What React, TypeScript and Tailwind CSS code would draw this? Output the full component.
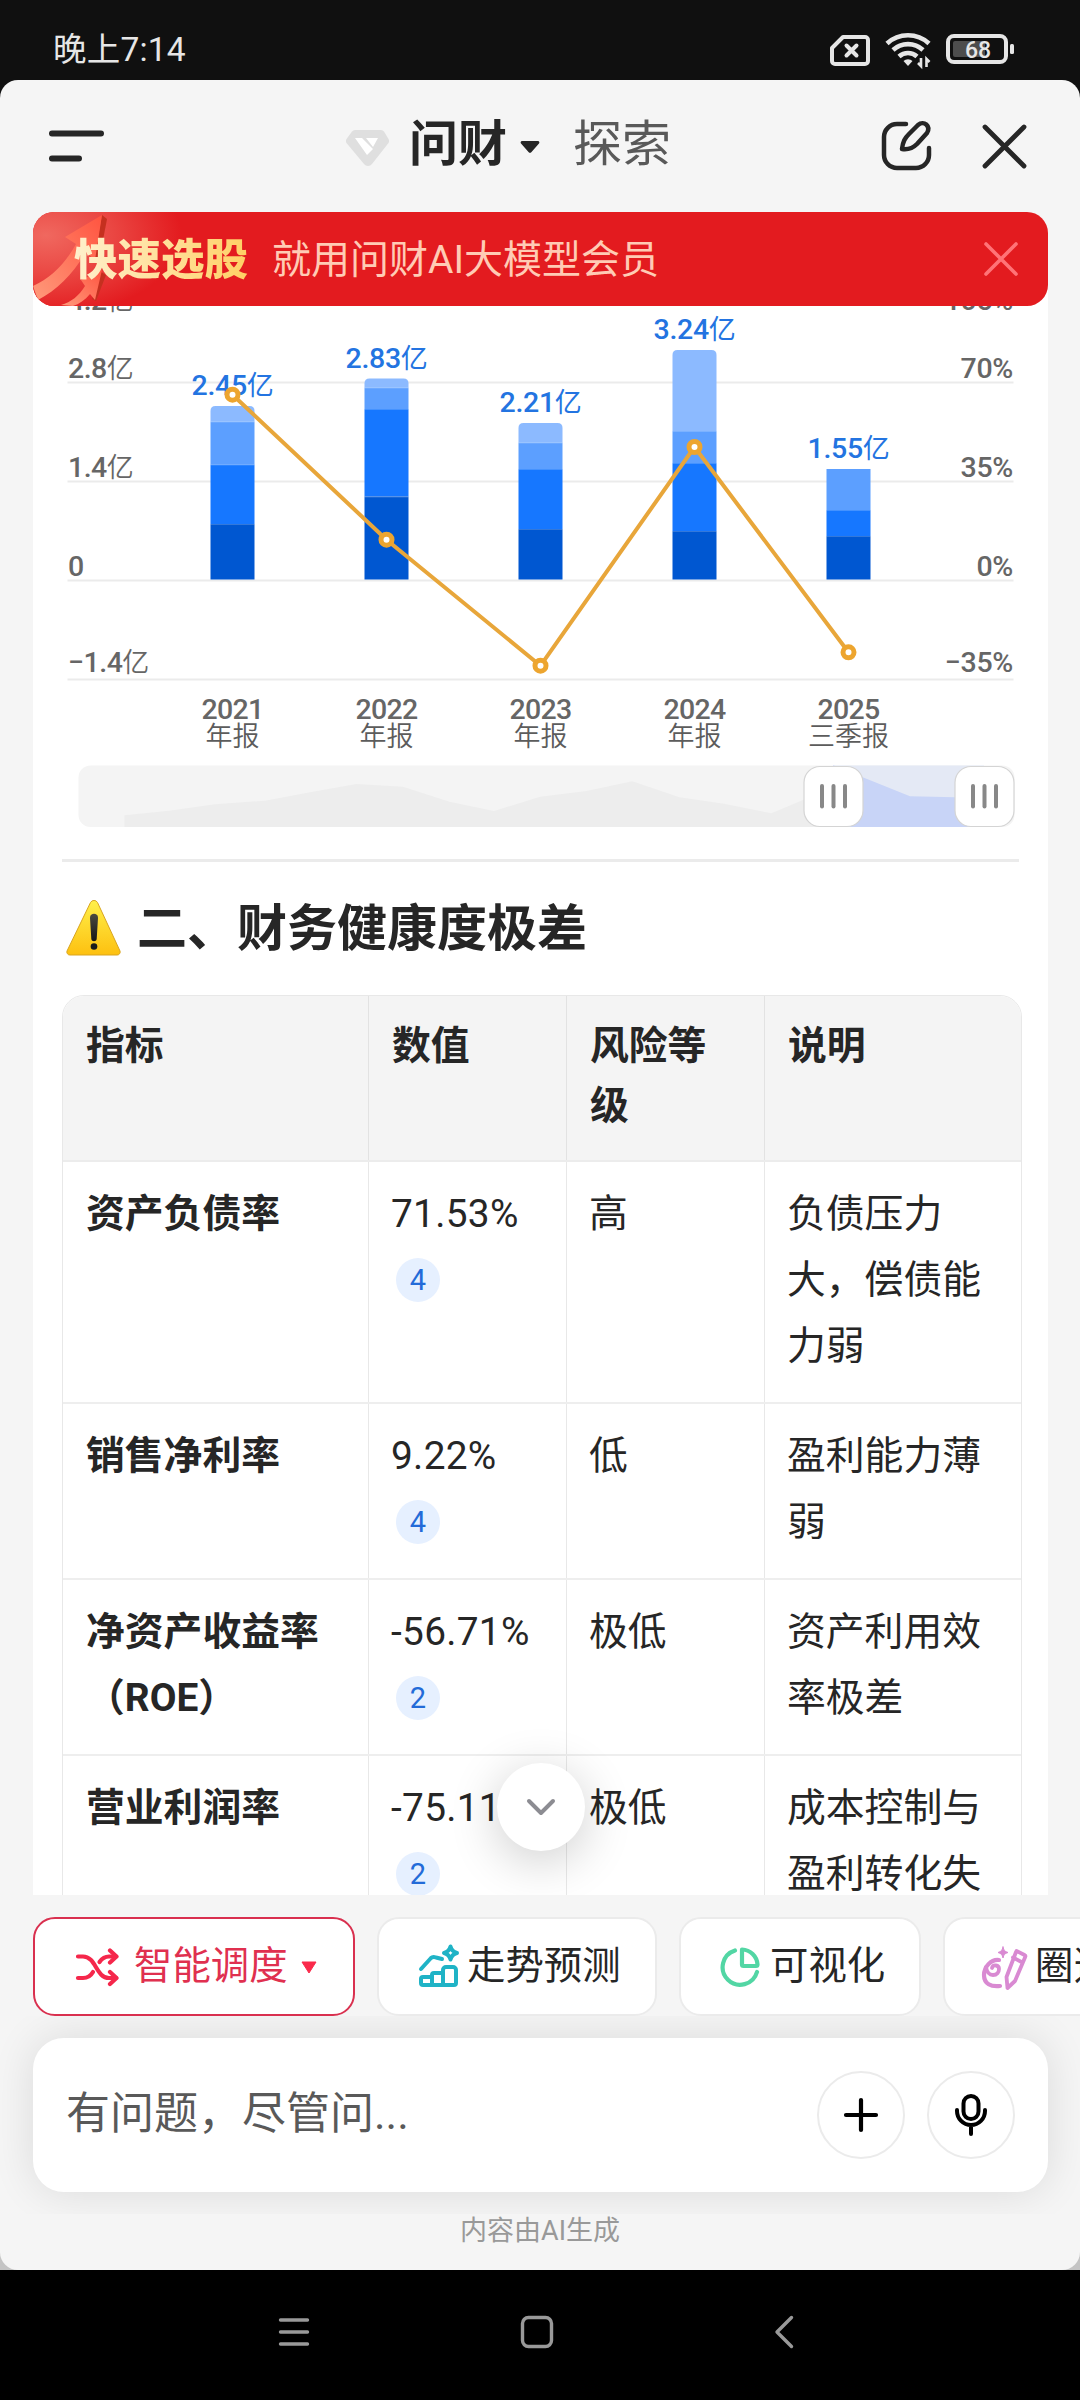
import type { ReactNode } from "react";

/* ---------------- Chart data ---------------- */

interface Period {
  x: number;
  year: string;
  label: string;
  total: string;
  /** Baseline of the total label above the bar. */
  totalY: number;
  /** Segment tops from the lightest to the darkest band; null when absent. */
  tops: (number | null)[];
  /** Position of the growth-rate point. */
  rateY: number;
}

const CHART_TOP = 252;
const ZERO_Y = 580;
const BAR_WIDTH = 44;
const BAND_COLORS = ["#8cbaff", "#5c9fff", "#1677ff", "#0057d1"];

const PERIODS: Period[] = [
  { x: 232.5, year: "2021", label: "年报", total: "2.45", totalY: 394, tops: [406, 421.5, 464.5, 524], rateY: 394.7 },
  { x: 386.5, year: "2022", label: "年报", total: "2.83", totalY: 367, tops: [378.5, 387.5, 409, 496.5], rateY: 539.7 },
  { x: 540.5, year: "2023", label: "年报", total: "2.21", totalY: 411, tops: [423, 442.5, 469, 529], rateY: 665.7 },
  { x: 694.5, year: "2024", label: "年报", total: "3.24", totalY: 338, tops: [350, 431, 463, 531], rateY: 447 },
  { x: 848.5, year: "2025", label: "三季报", total: "1.55", totalY: 457, tops: [null, 469, 510, 536], rateY: 652.3 },
];

const AXIS = [
  { y: 309.5, left: "4.2", right: "105%" },
  { y: 378, left: "2.8", right: "70%" },
  { y: 477, left: "1.4", right: "35%" },
  { y: 575.5, left: "0", right: "0%" },
  { y: 671.5, left: "−1.4", right: "−35%" },
];

const GRID_LINES = [382, 481, 580, 679];

/* ---------------- Table data ---------------- */

interface Metric {
  name: ReactNode;
  value: string;
  source: number;
  level: string;
  note: string;
}

const METRICS: Metric[] = [
  { name: "资产负债率", value: "71.53%", source: 4, level: "高", note: "负债压力大，偿债能力弱" },
  { name: "销售净利率", value: "9.22%", source: 4, level: "低", note: "盈利能力薄弱" },
  { name: <>净资产收益率<br />（ROE）</>, value: "-56.71%", source: 2, level: "极低", note: "资产利用效率极差" },
  { name: "营业利润率", value: "-75.11%", source: 2, level: "极低", note: "成本控制与盈利转化失衡" },
];

const COLUMNS = "grid grid-cols-[306px_198px_198px_257px]";

/* ---------------- Status bar ---------------- */

function StatusBar() {
  return (
    <div className="flex h-20 items-center justify-between bg-[#101010] pl-[53px] pr-[64px] text-[#e6e6e6]">
      <span className="mt-[20px] text-[33.500px] leading-none tracking-[0.200px]">晚上7:14</span>
      <svg width="188" height="40" viewBox="828 30 188 40" className="mt-[20px]" fill="none">
        {/* SIM missing */}
        <path d="M843 37H865a3 3 0 0 1 3 3V61a3 3 0 0 1-3 3H835a3 3 0 0 1-3-3V48Z" stroke="#e6e6e6" strokeWidth="4" strokeLinejoin="round" />
        <path d="M846.500 45.500l10 10M856.500 45.500l-10 10" stroke="#e6e6e6" strokeWidth="4" strokeLinecap="round" />
        {/* Wi-Fi */}
        <path d="M887 43.500a31 31 0 0 1 42 0M893 50a22 22 0 0 1 30 0M899 56.500a13.500 13.500 0 0 1 18 0" stroke="#e6e6e6" strokeWidth="4.600" />
        <path d="M903.500 61a6.500 6.500 0 0 1 9 0L908 66Z" fill="#e6e6e6" />
        <path d="M921 58V66l-3-3M926.500 67V59l3 3" stroke="#e6e6e6" strokeWidth="2.600" />
        {/* Battery */}
        <rect x="948" y="36" width="58" height="26" rx="6" stroke="#e6e6e6" strokeWidth="4" />
        <rect x="953" y="41" width="32" height="16" rx="2" fill="#4d4d4d" />
        <rect x="1010" y="44" width="4" height="10" rx="1.500" fill="#e6e6e6" />
        <text x="978" y="57.500" textAnchor="middle" fontSize="23" fontWeight="500" fill="#e6e6e6" className="font-['Roboto']">68</text>
      </svg>
    </div>
  );
}

/* ---------------- Header ---------------- */

function Header() {
  return (
    <header className="flex h-[132px] items-center pl-[47px] pr-[52px]">
      <svg width="60" height="40" viewBox="47 126 60 40" stroke="#262626" strokeWidth="6" strokeLinecap="round">
        <path d="M52 133.500H101M52 158.500H79" />
      </svg>
      <svg width="44" height="38" viewBox="347 128 44 38" className="ml-[239px] mt-[3px]">
        <path d="M356 129H382a4 4 0 0 1 3 1.500L389.500 138a4 4 0 0 1 0 4L373 163a5 5 0 0 1-8 0L347.500 142a4 4 0 0 1 0-4L353 130.500a4 4 0 0 1 3-1.500Z" fill="#dfdfdf" />
        <path d="M356 137h7l11 11-6 6ZM367 137h12l-5 9Z" fill="#fff" />
      </svg>
      <span className="ml-[19px] -mt-[3px] text-[49px] font-bold leading-none text-[#262626]">问财</span>
      <svg width="22" height="14" viewBox="0 0 22 14" className="ml-[12px] mt-[1px]">
        <path d="M3 1H19a1.500 1.500 0 0 1 1 2.500L12.500 12a2 2 0 0 1-3 0L2 3.500A1.500 1.500 0 0 1 3 1Z" fill="#262626" />
      </svg>
      <span className="ml-[32px] -mt-[3px] text-[49px] leading-none text-[#595959]">探索</span>
      <div className="ml-auto flex items-center gap-[47px]">
        <svg width="54" height="54" viewBox="878 119 54 54" fill="none" stroke="#262626" strokeWidth="4.500" strokeLinecap="round" strokeLinejoin="round">
          <path d="M905 124H896a13 13 0 0 0-13 13v18a13 13 0 0 0 13 13h19a13 13 0 0 0 13-13V148" />
          <path d="M901 149c1-8 3-11 7-15l9-9c6-5 13 1 9 8l-10 11c-4 4-8 6-15 5Z" />
        </svg>
        <svg width="48" height="48" viewBox="979 122 48 48" stroke="#262626" strokeWidth="4.800" strokeLinecap="round">
          <path d="M984 127l39 39M1023 127l-39 39" />
        </svg>
      </div>
    </header>
  );
}

function PromoBanner() {
  return (
    <div className="absolute inset-x-0 top-0 z-10 flex h-[94px] items-center overflow-hidden rounded-[21px] bg-[#e31b1f]">
      <svg width="160" height="94" viewBox="0 0 160 94" className="absolute left-0 top-0">
        <defs>
          <radialGradient id="glow" cx="0.080" cy="0.250" r="0.850">
            <stop offset="0" stopColor="#f0685f" />
            <stop offset="0.500" stopColor="#ea4642" />
            <stop offset="1" stopColor="#e31b1f" />
          </radialGradient>
          <linearGradient id="arrow" x1="0" y1="1" x2="1" y2="0">
            <stop offset="0" stopColor="#ff9a7b" />
            <stop offset="1" stopColor="#ff5440" />
          </linearGradient>
        </defs>
        <rect width="160" height="94" fill="url(#glow)" />
        <path d="M69 3l5 4-8 42-5-2Z" fill="#c5301f" />
        <path d="M0 74C18 66 32 52 43 32L32 25 69 3 62 48 53 40C40 62 24 78 5 88Z" fill="url(#arrow)" />
        <path d="M68 60l5 3-10 26-4-2Z" fill="#c5301f" />
        <path d="M28 93C38 90 46 84 52 74L48 68 69 58 62 88 57 82C52 88 46 92 40 94Z" fill="url(#arrow)" />
      </svg>
      <span className="relative ml-[41px] mt-[3px] bg-gradient-to-r from-[#fff0cc] to-[#ffd063] bg-clip-text text-[43.500px] font-black leading-[60px] text-transparent">
        快速选股
      </span>
      <span className="relative ml-[24px] mt-[2px] text-[39px] leading-none text-[#ffcbb5]">就用问财AI大模型会员</span>
      <svg width="36" height="36" viewBox="0 0 36 36" className="ml-auto mr-[29px]" stroke="#ff7377" strokeWidth="3.600" strokeLinecap="round">
        <path d="M3 3l30 30M33 3L3 33" />
      </svg>
    </div>
  );
}

/* ---------------- Chart ---------------- */

function RangeHandle({ x }: { x: number }) {
  return (
    <g>
      <rect x={x} y="766.500" width="59" height="60" rx="16" fill="#fff" stroke="#d4d4d4" strokeWidth="1.200" />
      {[18, 29.500, 41].map((dx) => (
        <rect key={dx} x={x + dx - 2} y="784" width="4" height="24.500" rx="2" fill="#888" />
      ))}
    </g>
  );
}

function RevenueChart() {
  const linePoints = PERIODS.map((p) => `${p.x},${p.rateY}`).join(" ");
  return (
    <svg width="1015" height="580" viewBox={`33 ${CHART_TOP} 1015 580`} className="block">
      {GRID_LINES.map((y) => (
        <rect key={y} x="67.500" y={y - 0.500} width="946" height="2" fill="#ebebeb" />
      ))}

      {AXIS.map((tick) => (
        <g key={tick.y} fill="#666" fontSize="28.500" fontWeight="500" className="font-['Roboto','Noto_Sans_CJK_SC']">
          <text x="68" y={tick.y} letterSpacing="-0.500">
            {tick.left}
            {tick.left !== "0" && <tspan fontSize="27" fontWeight="350">亿</tspan>}
          </text>
          <text x="1013" y={tick.y} textAnchor="end" letterSpacing="-0.300">{tick.right}</text>
        </g>
      ))}

      {PERIODS.map((p) => {
        const visible = p.tops.filter((t) => t !== null);
        return (
          <g key={p.year}>
            {p.tops.map((top, i) => {
              if (top === null) return null;
              const bottom = p.tops[i + 1] ?? ZERO_Y - 0.500;
              const left = p.x - BAR_WIDTH / 2;
              /* Only the lightest band has rounded shoulders. */
              return i === 0 ? (
                <path
                  key={i}
                  d={`M${left} ${bottom}V${top + 5}q0-5 5-5h${BAR_WIDTH - 10}q5 0 5 5V${bottom}Z`}
                  fill={BAND_COLORS[i]}
                />
              ) : (
                <rect key={i} x={left} y={top} width={BAR_WIDTH} height={bottom - top} fill={BAND_COLORS[i]} />
              );
            })}
            {visible.slice(1).map((top) => (
              <rect key={top} x={p.x - BAR_WIDTH / 2} y={top} width={BAR_WIDTH} height="1" fill="#fff" opacity="0.200" />
            ))}
          </g>
        );
      })}

      {PERIODS.map((p) => (
        <g key={p.year} textAnchor="middle" className="font-['Roboto','Noto_Sans_CJK_SC']">
          <text x={p.x} y={p.totalY + 0.500} fontSize="28.500" fontWeight="500" letterSpacing="-0.300" fill="#2374e1">
            {p.total}
            <tspan fontSize="27" fontWeight="400">亿</tspan>
          </text>
          <text x={p.x} y="718.500" fontSize="28.500" fontWeight="500" letterSpacing="-0.700" fill="#666">{p.year}</text>
          <text x={p.x} y="745.500" fontSize="27" fontWeight="350" fill="#5c5c5c">{p.label}</text>
        </g>
      ))}

      <polyline points={linePoints} fill="none" stroke="#e8a63a" strokeWidth="4" strokeLinejoin="round" />
      {PERIODS.map((p) => (
        <circle key={p.year} cx={p.x} cy={p.rateY} r="5.500" fill="#fff" stroke="#eda52f" strokeWidth="5" />
      ))}

      {/* Range selector under the plot */}
      <clipPath id="track">
        <rect x="78.500" y="765.500" width="936" height="61.500" rx="12" />
      </clipPath>
      <g clipPath="url(#track)">
        <rect x="78" y="765" width="937" height="62" fill="#f4f4f4" />
        <path
          d="M124.500 827V815.300L169 810.700 215 804.300 265 800.700 310 792.300 356.500 784 403 786.700 449.500 801.700 494 811 540 796.700 586.500 791 632.300 781.300 679.500 797.300 724 803.700 771.400 813.300 803 800 833 787V827Z"
          fill="#ededed"
        />
        <rect x="833" y="765" width="151" height="62" fill="#e4e9f5" />
        <path d="M833 827V765L862.700 777.300 910 796.300 955 797.300 984 798V827Z" fill="#c8d4f7" />
      </g>
      <RangeHandle x={804} />
      <RangeHandle x={955} />
    </svg>
  );
}

/* ---------------- Table ---------------- */

function SectionHeading() {
  return (
    <h2 className="flex h-[133px] items-center pl-[32px] text-[50px] font-bold leading-none text-[#262626]">
      <svg width="58" height="58" viewBox="0 0 58 58" className="-mt-px">
        <defs>
          <linearGradient id="warn" x1="0" y1="0" x2="0" y2="1">
            <stop offset="0" stopColor="#fff04a" />
            <stop offset="1" stopColor="#fdc010" />
          </linearGradient>
          <linearGradient id="mark" x1="0" y1="0" x2="0" y2="1">
            <stop offset="0" stopColor="#4a4a40" />
            <stop offset="1" stopColor="#161616" />
          </linearGradient>
        </defs>
        <path
          d="M25.500 3.500a4 4 0 0 1 7 0L55 52a3 3 0 0 1-3 4H5a3 3 0 0 1-3-4Z"
          fill="url(#warn)"
          stroke="#d9a520"
          strokeWidth="1"
        />
        <path d="M25 18.500c0-5 8-5 8 0L31.700 40c-.3 3-5.100 3-5.400 0Z" fill="url(#mark)" />
        <circle cx="29" cy="47.500" r="3.300" fill="#1c1c1c" />
      </svg>
      <span className="ml-[14px]">二、财务健康度极差</span>
    </h2>
  );
}

function SourceBadge({ id }: { id: number }) {
  return (
    <span className="ml-[5px] mt-[11px] flex size-11 items-center justify-center rounded-full bg-[#e6f0ff] text-[29px] leading-none text-[#236bd8]">
      {id}
    </span>
  );
}

function MetricTable() {
  return (
    <div className="ml-[29px] w-[960px] overflow-hidden rounded-t-[22px] border border-[#e8e8e8] text-[38.800px] text-[#262626]">
      <div className={`${COLUMNS} h-[166px] divide-x divide-[#e2e2e2] border-b-2 border-[#ececec] bg-[#f4f4f4] font-bold leading-[60px]`}>
        {["指标", "数值", "风险等级", "说明"].map((title) => (
          <div key={title} className="pl-[23px] pr-[22px] pt-[20px]">{title}</div>
        ))}
      </div>
      {METRICS.map((m) => (
        <div key={m.value} className={`${COLUMNS} divide-x divide-[#e8e8e8] border-b-2 border-[#eee] leading-[66px]`}>
          <div className="whitespace-nowrap pb-[23px] pl-[23px] pt-[19px] font-bold">{m.name}</div>
          <div className="pb-[23px] pl-[22px] pt-[19px]">
            <div className="whitespace-nowrap tracking-[0.300px]">{m.value}</div>
            <SourceBadge id={m.source} />
          </div>
          <div className="px-[22px] pb-[23px] pt-[19px]">{m.level}</div>
          <div className="px-[22px] pb-[23px] pt-[19px]">{m.note}</div>
        </div>
      ))}
    </div>
  );
}

/* ---------------- Bottom area ---------------- */

function Chip({ children, active = false, className }: { children: ReactNode; active?: boolean; className: string }) {
  return (
    <div
      className={`flex h-[99px] shrink-0 items-center whitespace-nowrap rounded-[22px] border-2 bg-white text-[38.400px] leading-none ${
        active ? "border-[#d9304f] text-[#e0304f]" : "border-[#ebebeb] text-[#262626]"
      } ${className}`}
    >
      {children}
    </div>
  );
}

function SkillChips() {
  return (
    <div className="flex h-[121px] items-end gap-[22px] overflow-hidden pl-[33px]">
      <Chip active className="w-[322px] pl-[40px]">
        <svg width="44" height="40" viewBox="0 0 44 40" fill="none" stroke="#f5274b" strokeWidth="4.200" strokeLinecap="round" strokeLinejoin="round">
          <path d="M3 9.500H8C21 9.500 21 31 34 31H41M3 31H8c5 0 8-2.500 10-6M24.500 15C27 11.500 30 9.500 34 9.500H41" />
          <path d="M35 3.500l6.500 6-6.500 6M35 25l6.500 6-6.500 6" />
        </svg>
        <span className="ml-[15px]">智能调度</span>
        <svg width="16" height="13" viewBox="0 0 16 13" className="ml-[13px] mt-[2px]">
          <path d="M1 1H15L8 12Z" fill="#fa2a4b" stroke="#fa2a4b" strokeLinejoin="round" />
        </svg>
      </Chip>
      <Chip className="w-[280px] pl-[38px]">
        <svg width="44" height="46" viewBox="0 0 44 46" className="-mt-[3px]" fill="none" stroke="#1fb3c6" strokeWidth="4" strokeLinecap="round" strokeLinejoin="round">
          <path d="M4 27L14 16c1.500-1.500 3-1.300 5-.5l6 1.500" />
          <path d="M33.500 4.500c1 4 2.500 5.500 6.500 6.500-4 1-5.500 2.500-6.500 6.500-1-4-2.500-5.500-6.500-6.500 4-1 5.500-2.500 6.500-6.500Z" />
          <path d="M4 37a2 2 0 0 1 2-2h9v8H6a2 2 0 0 1-2-2ZM15 33a2 2 0 0 1 2-2h9v12H15ZM26 28a3 3 0 0 1 3-3h7a3 3 0 0 1 3 3v13a2 2 0 0 1-2 2H26Z" />
        </svg>
        <span className="ml-[6px]">走势预测</span>
      </Chip>
      <Chip className="w-[242px] pl-[37px]">
        <svg width="44" height="44" viewBox="0 0 44 44" fill="none" stroke="#52d6a4" strokeWidth="4.200" strokeLinecap="round" strokeLinejoin="round">
          <path d="M17 5.500A17.500 17.500 0 1 0 39 27" />
          <path d="M24 4.500v15a1.500 1.500 0 0 0 1.500 1.500H38a1.500 1.500 0 0 0 1.500-1.500A16 16 0 0 0 24 4.500Z" />
        </svg>
        <span className="ml-[8px]">可视化</span>
      </Chip>
      <Chip className="w-[280px] pl-[34px]">
        <svg width="50" height="48" viewBox="0 0 50 48" fill="none" stroke="#d98ad2" strokeWidth="4.200" strokeLinecap="round" strokeLinejoin="round">
          <path d="M20 17C12 16 5 24 5 32c0 9 7 12 16 11" />
          <path d="M7 24c1 6 4 8 7 8 4 0 6-3 6-6 0-4-6-5-7-1" strokeWidth="3.800" />
          <path d="M24 4c.8 3.500 1.800 4.500 5 5.500-3.200 1-4.200 2-5 5.500-.8-3.500-1.800-4.500-5-5.500 3.200-1 4.200-2 5-5.500Z" fill="#d98ad2" strokeWidth="1" />
          <path d="M37.500 8l8 4a1.500 1.500 0 0 1 .7 2L36 38l-7.500 7-1-11L37 9M34 14.500l8.500 4.500" strokeWidth="3.800" />
        </svg>
        <span className="ml-[6px]">圈选</span>
      </Chip>
    </div>
  );
}

function Composer() {
  return (
    <div className="h-[198px] overflow-hidden pl-[33px] pr-8 pt-[22px]">
      <div className="flex h-[154px] items-center rounded-[31px] bg-white pl-[33px] pr-[33px] shadow-[0_0_44px_rgba(0,0,0,0.110)]">
        <span className="-mt-[2px] flex-1 text-[44px] leading-none text-[#595959]">有问题，尽管问...</span>
        <div className="flex gap-[22px]">
          <div className="flex size-[88px] items-center justify-center rounded-full border-2 border-[#ebebeb]">
            <svg width="36" height="36" viewBox="0 0 36 36" stroke="#000" strokeWidth="4.200" strokeLinecap="round">
              <path d="M18 3v30M3 18h30" />
            </svg>
          </div>
          <div className="flex size-[88px] items-center justify-center rounded-full border-2 border-[#ebebeb]">
            <svg width="36" height="44" viewBox="0 0 36 44" fill="none" stroke="#000" strokeWidth="4" strokeLinecap="round">
              <rect x="10.500" y="3" width="15" height="23" rx="7.500" />
              <path d="M4 17v1a14 14 0 0 0 28 0V17M18 33v8" />
            </svg>
          </div>
        </div>
      </div>
    </div>
  );
}

function SystemNav() {
  return (
    <nav className="h-[130px] bg-black">
      <svg width="1080" height="130" viewBox="0 2270 1080 130" fill="none" stroke="#999" strokeWidth="3.400" strokeLinecap="round" strokeLinejoin="round">
        <path d="M280.500 2320H307.500M280.500 2332H307.500M280.500 2344H307.500" />
        <rect x="522.500" y="2317.500" width="29" height="29" rx="6" />
        <path d="M791.500 2317.500L777 2332l14.500 14.500" />
      </svg>
    </nav>
  );
}

export default function App() {
  return (
    <div className="h-[2400px] w-[1080px] overflow-hidden bg-[#101010] font-['Roboto','Noto_Sans_CJK_SC',sans-serif]">
      <StatusBar />
      <div className="bg-gradient-to-b from-[#101010] from-50% to-[#c4c4c4] to-50%">
        <div className="flex h-[2190px] flex-col overflow-hidden rounded-[18px] bg-[#f5f5f5]">
          <Header />

          <main className="relative ml-[33px] mr-8 h-[1683px] shrink-0 overflow-hidden">
            <PromoBanner />
            <div className="mt-10 min-h-full bg-white">
              <RevenueChart />
              <div className="ml-[29px] mt-[27px] h-[3px] w-[957px] bg-[#ebebeb]" />
              <SectionHeading />
              <MetricTable />
            </div>
            <button className="absolute bottom-[44px] left-[464px] flex size-[88px] items-center justify-center rounded-full bg-white shadow-[0_10px_50px_rgba(0,0,0,0.200)]">
              <svg width="32" height="20" viewBox="0 0 32 20" fill="none" stroke="#8c8c92" strokeWidth="4" strokeLinecap="round" strokeLinejoin="round">
                <path d="M4 4l12 12L28 4" />
              </svg>
            </button>
          </main>

          <SkillChips />
          <Composer />
          <p className="mt-[4px] text-center text-[27px] leading-none text-[#999]">内容由AI生成</p>
        </div>
      </div>
      <SystemNav />
    </div>
  );
}
